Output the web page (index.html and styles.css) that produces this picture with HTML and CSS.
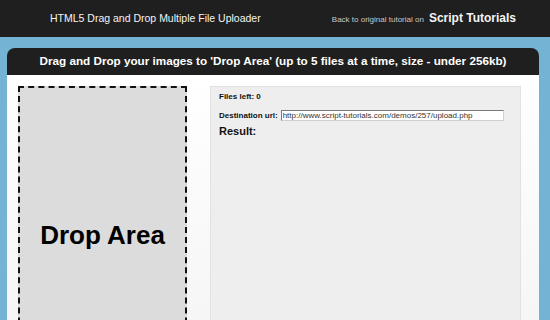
FILE: index.html
```html
<!DOCTYPE html>
<html>
<head>
<meta charset="utf-8">
<title>HTML5 Drag and Drop Multiple File Uploader</title>
<link rel="stylesheet" href="styles.css">
</head>
<body>
<header class="topbar">
  <h2 class="site-title">HTML5 Drag and Drop Multiple File Uploader</h2>
  <div class="back">Back to original tutorial on <a class="brand" href="#">Script Tutorials</a></div>
</header>
<div class="container">
  <h1 class="head">Drag and Drop your images to 'Drop Area' (up to 5 files at a time, size - under 256kb)</h1>
  <div class="content">
    <div class="dropbox">Drop Area</div>
    <div class="panel">
      <p class="files">Files left: 0</p>
      <div class="dest">
        <label class="dest-label">Destination url:</label>
        <input class="url" type="text" value="http://www.script-tutorials.com/demos/257/upload.php">
      </div>
      <h3 class="result">Result:</h3>
    </div>
  </div>
</div>
</body>
</html>
```

FILE: styles.css
```css
html, body {
  margin: 0;
  padding: 0;
  height: 320px;
  overflow: hidden;
}
body {
  background: #74b3d4;
  font-family: "Liberation Sans", Arial, sans-serif;
}
.topbar {
  height: 37px;
  background: #1f1f1f;
  display: flex;
  align-items: center;
  padding: 0 34px 2px 50px;
  box-sizing: border-box;
}
.site-title {
  margin: 0;
  font-size: 10.5px;
  font-weight: normal;
  color: #f4f4f4;
}
.back {
  margin-left: auto;
  font-size: 8px;
  color: #c8c8c8;
  display: flex;
  align-items: baseline;
  gap: 5px;
}
.brand {
  font-size: 12px;
  font-weight: bold;
  color: #f4f4f4;
  text-decoration: none;
}
.container {
  margin: 11px 11px 0 7px;
  border-radius: 8px 8px 0 0;
  overflow: hidden;
}
.head {
  margin: 0;
  height: 27px;
  line-height: 26px;
  background: #1f1f1f;
  color: #fff;
  font-size: 11.7px;
  font-weight: bold;
  text-align: center;
}
.content {
  display: flex;
  align-items: flex-start;
  gap: 23px;
  padding: 11px 18px 0 11px;
  height: 234px;
  overflow: hidden;
  background: linear-gradient(to bottom, #ffffff 0%, #f6f6f6 100%);
}
.dropbox {
  width: 165px;
  height: 294px;
  flex: none;
  background: #dcdcdc;
  border: 2px dashed #111;
  font-size: 26px;
  font-weight: bold;
  color: #000;
  display: flex;
  align-items: center;
  justify-content: center;
}
.panel {
  flex: 1;
  height: 300px;
  background: #eeeeee;
  border: 1px solid #e2e2e2;
  padding: 4px 8px;
  box-sizing: border-box;
}
.files {
  margin: 0;
  font-size: 8px;
  font-weight: bold;
  line-height: 12px;
  color: #111;
}
.dest {
  margin-top: 7px;
  display: flex;
  align-items: center;
  gap: 3px;
}
.dest-label {
  font-size: 8px;
  font-weight: bold;
  color: #111;
}
.url {
  width: 223px;
  height: 11px;
  box-sizing: border-box;
  margin: 0;
  padding: 0 1px;
  border: 1px solid;
  border-color: #7a7a7a #d0d0d0 #d0d0d0 #7a7a7a;
  background: #fff;
  font-family: "Liberation Sans", Arial, sans-serif;
  font-size: 8px;
  color: #333;
}
.result {
  margin: 4px 0 0;
  font-size: 11px;
  line-height: 13px;
  font-weight: bold;
  color: #111;
}
```
